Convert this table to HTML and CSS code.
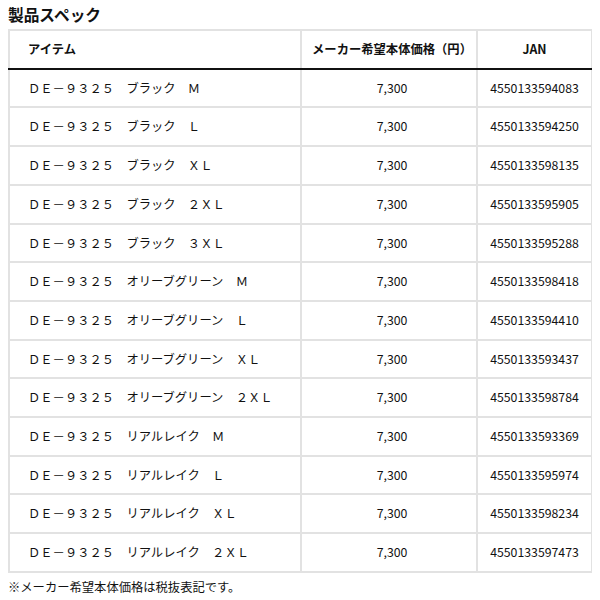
FILE: index.html
```html
<!DOCTYPE html>
<html lang="ja">
<head>
<meta charset="utf-8">
<title>製品スペック</title>
<link rel="stylesheet" href="styles.css">
</head>
<body>
<h2 class="title">製品スペック</h2>
<table class="spec">
  <colgroup>
    <col class="c-item">
    <col class="c-price">
    <col class="c-jan">
  </colgroup>
  <thead>
    <tr><th class="item">アイテム</th><th class="price">メーカー希望本体価格（円）</th><th>JAN</th></tr>
  </thead>
  <tbody>
    <tr><td class="item">ＤＥ－９３２５　ブラック　Ｍ</td><td class="price">7,300</td><td>4550133594083</td></tr>
    <tr><td class="item">ＤＥ－９３２５　ブラック　Ｌ</td><td class="price">7,300</td><td>4550133594250</td></tr>
    <tr><td class="item">ＤＥ－９３２５　ブラック　ＸＬ</td><td class="price">7,300</td><td>4550133598135</td></tr>
    <tr><td class="item">ＤＥ－９３２５　ブラック　２ＸＬ</td><td class="price">7,300</td><td>4550133595905</td></tr>
    <tr><td class="item">ＤＥ－９３２５　ブラック　３ＸＬ</td><td class="price">7,300</td><td>4550133595288</td></tr>
    <tr><td class="item">ＤＥ－９３２５　オリーブグリーン　Ｍ</td><td class="price">7,300</td><td>4550133598418</td></tr>
    <tr><td class="item">ＤＥ－９３２５　オリーブグリーン　Ｌ</td><td class="price">7,300</td><td>4550133594410</td></tr>
    <tr><td class="item">ＤＥ－９３２５　オリーブグリーン　ＸＬ</td><td class="price">7,300</td><td>4550133593437</td></tr>
    <tr><td class="item">ＤＥ－９３２５　オリーブグリーン　２ＸＬ</td><td class="price">7,300</td><td>4550133598784</td></tr>
    <tr><td class="item">ＤＥ－９３２５　リアルレイク　Ｍ</td><td class="price">7,300</td><td>4550133593369</td></tr>
    <tr><td class="item">ＤＥ－９３２５　リアルレイク　Ｌ</td><td class="price">7,300</td><td>4550133595974</td></tr>
    <tr><td class="item">ＤＥ－９３２５　リアルレイク　ＸＬ</td><td class="price">7,300</td><td>4550133598234</td></tr>
    <tr><td class="item">ＤＥ－９３２５　リアルレイク　２ＸＬ</td><td class="price">7,300</td><td>4550133597473</td></tr>
  </tbody>
</table>
<p class="note">※メーカー希望本体価格は税抜表記です。</p>
</body>
</html>
```
FILE: styles.css
```css
html, body {
  background: #fff;
}
body {
  margin: 4px 8px 0;
  font-family: "Noto Sans CJK JP", "Noto Sans", sans-serif;
  color: #111;
  font-size: 12.3px;
}
.title {
  margin: 0 0 3px;
  font-size: 15.7px;
  line-height: 22px;
  font-weight: bold;
}
.spec {
  width: 583px;
  table-layout: fixed;
  border-collapse: collapse;
  border: 2px solid #e2e2e2;
}
.c-item { width: 292px; }
.c-price { width: 176px; }
.c-jan { width: 115px; }
.spec th, .spec td {
  border: 2px solid #e2e2e2;
  padding: 9px 0;
  line-height: 18.7px;
  text-align: center;
  font-size: 12.3px;
}
.spec th {
  font-weight: bold;
  border-bottom: 2px solid #111;
}
.spec .item {
  text-align: left;
  padding-left: 18px;
}
.spec .price {
  padding-left: 6px;
}
.note {
  margin: 5px 0 0;
  font-size: 12.3px;
  line-height: 18px;
}
```
